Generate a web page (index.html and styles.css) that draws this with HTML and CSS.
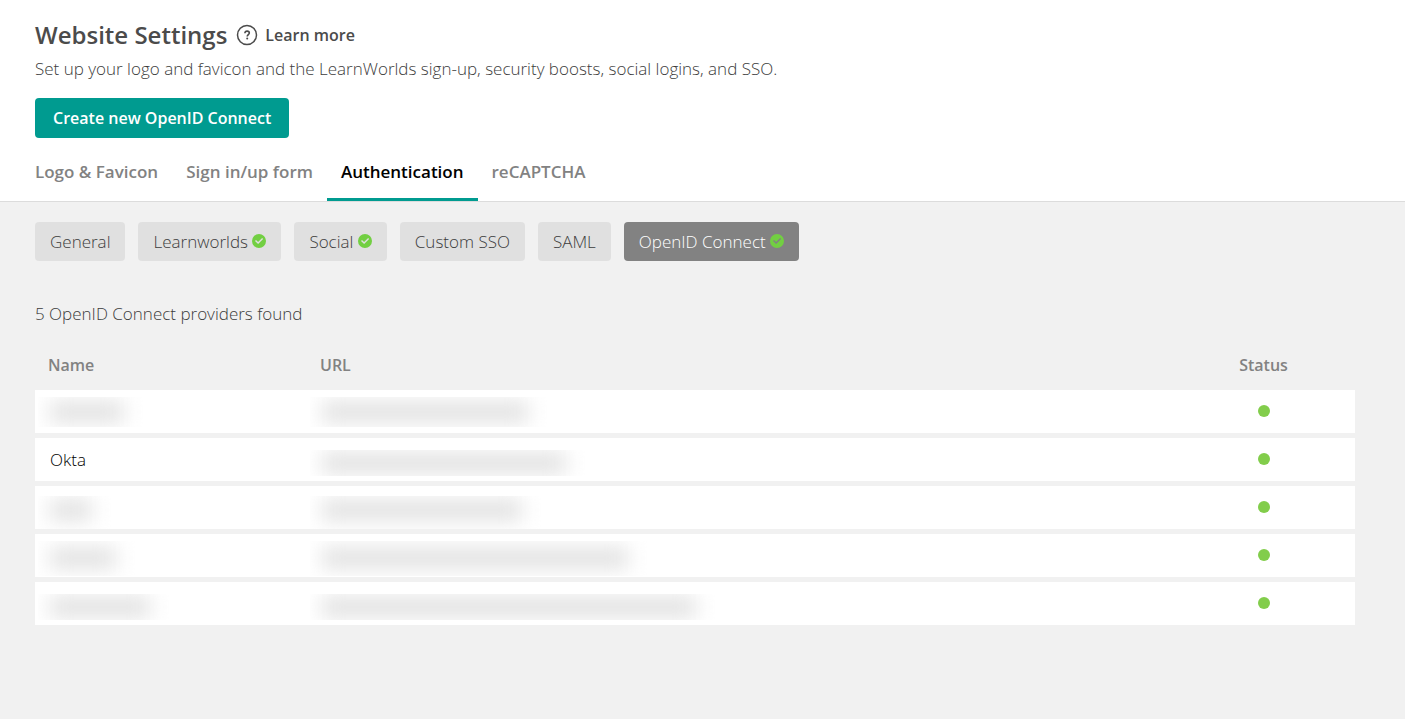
FILE: index.html
```html
<!DOCTYPE html>
<html lang="en">
<head>
    <meta charset="UTF-8">
    <meta name="viewport" content="width=device-width, initial-scale=1.0">
    <title>Website Settings</title>
    <link rel="stylesheet" href="styles.css">
</head>
<body>
    <svg class="sprite" aria-hidden="true">
        <symbol id="check" viewBox="0 0 14 14">
            <path fill-rule="evenodd" d="M7 0a7 7 0 1 0 0 14a7 7 0 0 0 0-14zM10.1 4.1l1 1l-5 5l-3.100-3l1-1l2.100 2z"/>
        </symbol>
    </svg>

    <header class="page-header">
        <div class="title-row">
            <h1>Website Settings</h1>
            <a href="#" class="learn-more">
                <svg width="22" height="22" viewBox="0 0 22 22" fill="none" stroke="currentColor" aria-hidden="true">
                    <circle cx="11" cy="11" r="9.500" stroke-width="1.500"/>
                    <path d="M8.900 9.200c0-1.300.9-2.100 2.200-2.100s2.200.8 2.200 1.900c0 1.500-2.100 1.600-2.100 3.400" stroke-width="1.600"/>
                    <circle cx="11.200" cy="14.600" r="1" fill="currentColor" stroke="none"/>
                </svg>
                Learn more
            </a>
        </div>
        <p class="subtitle">Set up your logo and favicon and the LearnWorlds sign-up, security boosts, social logins, and SSO.</p>
        <button type="button" class="btn-create">Create new OpenID Connect</button>
        <nav class="tabs">
            <a href="#">Logo &amp; Favicon</a>
            <a href="#">Sign in/up form</a>
            <a href="#" class="active">Authentication</a>
            <a href="#">reCAPTCHA</a>
        </nav>
    </header>

    <main>
        <div class="chips">
            <button type="button">General</button>
            <button type="button">Learnworlds <svg class="check"><use href="#check"/></svg></button>
            <button type="button">Social <svg class="check"><use href="#check"/></svg></button>
            <button type="button">Custom SSO</button>
            <button type="button">SAML</button>
            <button type="button" class="active">OpenID Connect <svg class="check"><use href="#check"/></svg></button>
        </div>

        <p class="count">5 OpenID Connect providers found</p>

        <table class="providers">
            <thead>
                <tr>
                    <th class="name">Name</th>
                    <th class="url">URL</th>
                    <th class="status">Status</th>
                </tr>
            </thead>
            <tbody>
                <tr>
                    <td><div class="mask"><span style="width: 74px"></span></div></td>
                    <td><div class="mask"><span style="width: 206px"></span></div></td>
                    <td class="status"><span class="dot"></span></td>
                </tr>
                <tr class="short">
                    <td>Okta</td>
                    <td><div class="mask"><span style="width: 244px"></span></div></td>
                    <td class="status"><span class="dot"></span></td>
                </tr>
                <tr class="low">
                    <td><div class="mask"><span style="width: 42px"></span></div></td>
                    <td><div class="mask"><span style="width: 200px"></span></div></td>
                    <td class="status"><span class="dot"></span></td>
                </tr>
                <tr class="tall">
                    <td><div class="mask"><span style="width: 66px"></span></div></td>
                    <td><div class="mask"><span style="width: 306px"></span></div></td>
                    <td class="status"><span class="dot"></span></td>
                </tr>
                <tr class="short">
                    <td><div class="mask"><span style="width: 100px"></span></div></td>
                    <td><div class="mask"><span style="width: 374px"></span></div></td>
                    <td class="status"><span class="dot"></span></td>
                </tr>
            </tbody>
        </table>
    </main>
</body>
</html>
```
FILE: styles.css
```css
* {
    box-sizing: border-box;
}
body {
    margin: 0;
    min-height: 100vh;
    background-color: #f1f1f1;
    color: #3c3c3c;
    font-family: "Open Sans", "Noto Sans", sans-serif;
    font-size: 17px;
    font-weight: 300;
    line-height: 24px;
}
h1, p {
    margin: 0;
}
a {
    color: inherit;
    text-decoration: none;
}
button {
    border: none;
    border-radius: 4px;
    color: inherit;
    font: inherit;
    padding: 0 15px;
    white-space: nowrap;
    cursor: pointer;
}
.sprite {
    display: none;
}
.page-header {
    background-color: #fff;
    border-bottom: 1px solid #dcdcdc;
    padding: 18px 35px 0;
}
.title-row {
    display: flex;
    align-items: center;
    gap: 9px;
    color: #4b4b4b;
}
h1 {
    font-size: 24px;
    font-weight: 600;
    line-height: 34px;
}
.learn-more {
    display: flex;
    align-items: center;
    gap: 7px;
    font-size: 16px;
    font-weight: 600;
}
.subtitle {
    margin-top: 5px;
}
.btn-create {
    display: block;
    height: 40px;
    margin-top: 17px;
    padding: 0 18px;
    background-color: #009b90;
    color: #fff;
    font-size: 16px;
    font-weight: 600;
}
.tabs {
    display: flex;
    margin: 15px 0 0 -14px;
    color: #828282;
    font-weight: 600;
}
.tabs a {
    padding: 7px 14px 14px;
    border-bottom: 3px solid transparent;
}
.tabs .active {
    color: #000;
    border-color: #009b90;
}
main {
    padding: 20px 50px 20px 35px;
}
.chips {
    display: flex;
    flex-wrap: wrap;
    gap: 13px;
}
.chips button {
    height: 39px;
    background-color: #e0e0e0;
}
.chips .active {
    background-color: #828282;
    color: #fff;
}
.check {
    width: 14px;
    height: 14px;
    fill: #72cf42;
}
.count {
    margin-top: 41px;
}
.providers {
    width: 100%;
    margin-top: 22px;
    border-collapse: separate;
    border-spacing: 0 5px;
    table-layout: fixed;
}
th {
    height: 32px;
    padding: 0 13px;
    color: #828282;
    font-size: 16px;
    font-weight: 600;
    text-align: left;
    vertical-align: top;
}
th.name {
    width: 272px;
}
th.status {
    width: 183px;
}
td {
    height: 43px;
    padding: 0 15px;
    background-color: #fff;
    color: #000;
}
.status,
th.status {
    text-align: center;
}
td.status {
    padding-bottom: 2px;
}
.dot {
    display: block;
    width: 12px;
    height: 12px;
    margin: 0 auto;
    border-radius: 50%;
    background-color: #82cd4b;
}
/* blurred-out values */
.mask {
    display: flex;
    align-items: center;
    height: 30px;
    margin: 0 -12px;
    padding: 0 12px;
    overflow: hidden;
}
.mask span {
    flex-shrink: 0;
    height: 20px;
    background-color: #e0e0e0;
    filter: blur(10px);
}
.short .mask {
    height: 26px;
    margin-top: 6px;
}
.low .mask {
    height: 33px;
    margin-top: 10px;
    padding-bottom: 6px;
}
.tall .mask {
    height: 35px;
    margin-top: 5px;
}
```
